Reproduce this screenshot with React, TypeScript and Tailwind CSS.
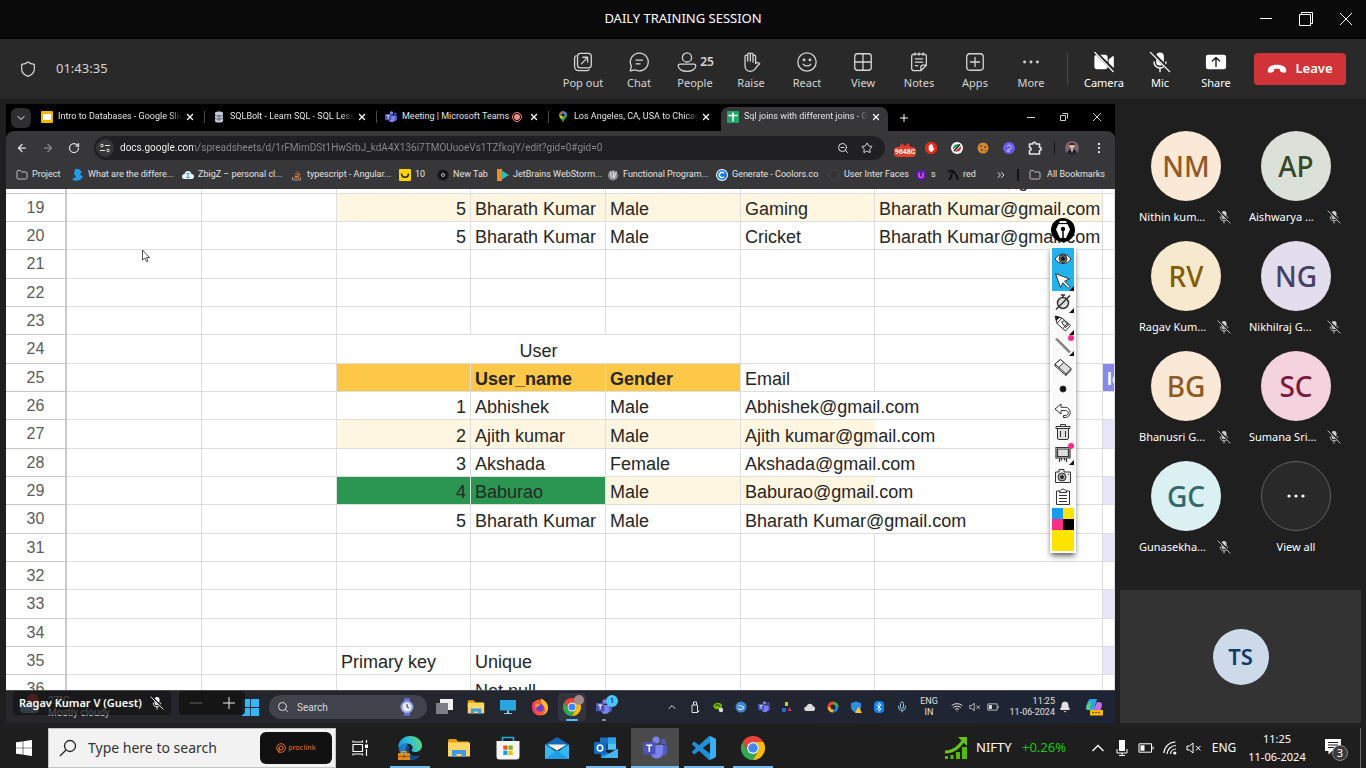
import type { ReactNode } from "react";
import {
  ArrowLeft,
  ArrowRight,
  Bell,
  Bluetooth,
  ChevronDown,
  ChevronUp,
  ChevronsRight,
  Folder,
  Mic,
  MoreVertical,
  Plus,
  RotateCw,
  Search,
  Star,
  Wifi,
  X,
  ZoomOut,
} from "lucide-react";

/* ---------- Meeting icons ---------- */

type IconProps = { children: ReactNode; className?: string; box?: string };

function Line({ children, className = "size-6", box = "0 0 24 24" }: IconProps) {
  return (
    <svg
      viewBox={box}
      className={className}
      fill="none"
      stroke="currentColor"
      strokeWidth="1.4"
      strokeLinecap="round"
      strokeLinejoin="round"
      aria-hidden="true"
    >
      {children}
    </svg>
  );
}

const PopOutIcon = () => (
  <Line>
    <rect x="6" y="2.500" width="15" height="16" rx="3.2" />
    <path d="M4.400 5.200A3 3 0 0 0 2.800 8v9A4.500 4.500 0 0 0 7.300 21.500H16a3 3 0 0 0 2.600-1.300M10.300 14 16.800 7M11.800 6.800h5.200V12" />
  </Line>
);
const ChatIcon = () => (
  <Line>
    <path d="M12.200 2.300a9.700 9.700 0 1 1-4.500 18.200L2.500 21.700l1.200-5.200A9.700 9.700 0 0 1 12.200 2.300zM8.800 10h7M8.800 14h4.400" />
  </Line>
);
const PeopleIcon = () => (
  <Line>
    <circle cx="12" cy="7" r="5" />
    <path d="M4.400 14.200h15.200a2 2 0 0 1 2 2c0 3.600-4.300 6-9.600 6s-9.600-2.400-9.600-6a2 2 0 0 1 2-2z" />
  </Line>
);
const HandIcon = () => (
  <Line>
    <path d="M5.500 12V6a1.450 1.450 0 0 1 2.900 0V11 3.800a1.450 1.450 0 0 1 2.900 0V11 3.800a1.450 1.450 0 0 1 2.900 0V12 6a1.400 1.400 0 0 1 2.800 0V13.500c1.300-1.300 3.600-1.200 4.500.4-2.400 1.600-3.500 3.800-5.100 5.900-1.200 1.500-2.700 2.400-5 2.400-3.600 0-5.900-2.600-5.900-6.400z" />
  </Line>
);
const ReactIcon = () => (
  <Line>
    <circle cx="12" cy="12" r="10" />
    <path d="M8 14.500c1.800 2.400 6.200 2.400 8 0" />
    <circle cx="8.800" cy="9.800" r=".8" fill="currentColor" />
    <circle cx="15.200" cy="9.800" r=".8" fill="currentColor" />
  </Line>
);
const ViewIcon = () => (
  <Line>
    <rect x="3" y="3" width="18" height="18" rx="3" />
    <path d="M12 3v18M3 12h18" />
  </Line>
);
const NotesIcon = () => (
  <Line>
    <path d="M6.500 3.500h11A2.500 2.500 0 0 1 20 6v9.500l-6 6H6.500A2.500 2.500 0 0 1 4 19V6a2.500 2.500 0 0 1 2.500-2.500zM20 15.500h-3.500a2.500 2.500 0 0 0-2.500 2.500v3.500M7.500 2v2.500M12 2v2.500M16.500 2v2.500M8 8.500h8M8 12.200h8M8 16h2.500" />
  </Line>
);
const AppsIcon = () => (
  <Line>
    <rect x="3" y="3" width="18" height="18" rx="3.500" />
    <path d="M12 7v10M7 12h10" />
  </Line>
);
const MoreIcon = () => (
  <svg viewBox="0 0 24 24" className="size-6" fill="currentColor" aria-hidden="true">
    <circle cx="5" cy="12" r="1.600" />
    <circle cx="12" cy="12" r="1.600" />
    <circle cx="19" cy="12" r="1.600" />
  </svg>
);
const CameraOffIcon = () => (
  <svg viewBox="0 0 24 24" className="size-6" aria-hidden="true">
    <path fill="currentColor" d="M4.500 4h8.500a3 3 0 0 1 3 3v10a3 3 0 0 1-3 3H4.500a3 3 0 0 1-3-3V7a3 3 0 0 1 3-3zM17 9.200l4.500-3.600c.6-.4 1.200 0 1.200.6v11.600c0 .6-.6 1-1.200.6L17 14.800z" />
    <path stroke="#292929" strokeWidth="3.500" d="M3.500 2 22.500 21" />
    <path stroke="currentColor" strokeWidth="1.500" strokeLinecap="round" d="M2 1.500 22 22.500" />
  </svg>
);
const MicOffIcon = ({ className = "size-6", bg = "#292929" }: { className?: string; bg?: string }) => (
  <svg viewBox="0 0 24 24" className={className} aria-hidden="true">
    <rect x="7.800" y="1.500" width="8.400" height="14.500" rx="4.200" fill="currentColor" />
    <path d="M5.500 12a6.500 6.500 0 0 0 13 0M12 18.500V22.500" fill="none" stroke="currentColor" strokeWidth="1.500" strokeLinecap="round" />
    <path stroke={bg} strokeWidth="3.500" d="M3.500 2 22.500 21" />
    <path stroke="currentColor" strokeWidth="1.500" strokeLinecap="round" d="M1.500 1.500 22.500 22.500" />
  </svg>
);
const ShareIcon = () => (
  <svg viewBox="0 0 24 24" className="size-6" aria-hidden="true">
    <rect x="1" y="4" width="22" height="16" rx="2.500" fill="currentColor" />
    <path d="M12 17V7.500M8 11l4-4 4 4" fill="none" stroke="#292929" strokeWidth="1.600" strokeLinecap="round" strokeLinejoin="round" />
  </svg>
);
const HangUpIcon = () => (
  <svg viewBox="0 0 20 10" className="h-2.5 w-5" fill="currentColor" aria-hidden="true">
    <path d="M10 .8c5.400 0 9.300 2.400 9.300 5.500 0 1.800-.8 2.700-2 2.500l-2.700-.5c-.9-.2-1.300-.7-1.500-1.500l-.4-1.700c-1.700-.6-3.700-.6-5.400 0l-.4 1.700c-.2.800-.6 1.300-1.500 1.500l-2.700.5c-1.200.2-2-.7-2-2.500C.7 3.200 4.600.8 10 .8z" />
  </svg>
);

/* ---------- Application logos ---------- */

const ChromeLogo = ({ className }: { className: string }) => (
  <svg viewBox="0 0 48 48" className={className} aria-hidden="true">
    <path fill="#ea4335" d="M24 12h20.800A24 24 0 0 0 3.200 12l10.400 18A12 12 0 0 1 24 12z" />
    <path fill="#34a853" d="M34.400 30 24 48A24 24 0 0 1 3.200 12l10.400 18a12 12 0 0 0 20.800 0z" />
    <path fill="#fbbc05" d="M34.400 30A12 12 0 0 0 24 12h20.800A24 24 0 0 1 24 48z" />
    <circle cx="24" cy="24" r="12" fill="#fff" />
    <circle cx="24" cy="24" r="9.500" fill="#4285f4" />
  </svg>
);
const TeamsLogo = ({ className }: { className: string }) => (
  <svg viewBox="0 0 24 24" className={className} aria-hidden="true">
    <circle cx="20.500" cy="5.500" r="2.500" fill="#5059c9" />
    <path fill="#5059c9" d="M16 9h7a1 1 0 0 1 1 1v6a4 4 0 0 1-6.500 3z" />
    <circle cx="13" cy="4" r="3.500" fill="#7b83eb" />
    <path fill="#7b83eb" d="M8 9h11a1 1 0 0 1 1 1v7a6.300 6.300 0 0 1-12.500 0z" />
    <rect x="0" y="6" width="12.500" height="12.500" rx="1" fill="#4b53bc" />
    <path d="M3.300 9.200h6M6.300 9.200v6.500" stroke="#fff" strokeWidth="1.600" />
  </svg>
);
const ExplorerLogo = ({ className }: { className: string }) => (
  <svg viewBox="0 0 24 24" className={className} aria-hidden="true">
    <path fill="#e6a100" d="M1 4.500A1.500 1.500 0 0 1 2.500 3H9l2 2.500h10.500V12H1z" />
    <path fill="#ffd767" d="M1 6.500h22v14H1z" />
    <path fill="#3f9be8" d="M5 21v-7h14v7h-4.500v-3h-5v3z" />
  </svg>
);
const EdgeLogo = () => (
  <svg viewBox="0 0 24 24" className="size-6" aria-hidden="true">
    <defs>
      <linearGradient id="edge-wave" x1="0" y1=".6" x2="1" y2=".3">
        <stop offset="0" stopColor="#1d8fdc" />
        <stop offset=".5" stopColor="#2fc0d8" />
        <stop offset="1" stopColor="#66d96a" />
      </linearGradient>
    </defs>
    <path fill="#1b7fd0" d="M1 8C0 18 5 24 12.500 24c4 0 7-1.500 9-4.500-6 2-11.500 0-11-5.500L9 7z" />
    <path fill="#114a8b" d="M8.500 10c-3 5 0 12 5.500 13.900C19 23.500 21 21 21.500 19.500c-6 2-11.500-.5-11-6 .2-1.500 1-2.500 2-3z" />
    <path fill="url(#edge-wave)" d="M0 11C1 4 6 0 12 0c7.500 0 12 5 12 9.500 0 4-3 6.500-6.500 6.500-3.500 0-4.500-1.200-3.500-2.300C16 11 13.500 7.500 9 7.500 4.500 7.500 1 9.500 0 12z" />
    <path fill="#e08c1a" d="M0 17h12v7H0z" />
    <path fill="none" stroke="#e9a13b" strokeWidth="1.200" d="M4 17v-1.500h4V17" />
    <path fill="#8a4b08" d="M0 20h12v.8H0zM5 19.300h2v2.200H5z" />
  </svg>
);
const StoreLogo = () => (
  <svg viewBox="0 0 24 24" className="size-6" aria-hidden="true">
    <path d="M6.500 6V1.500h11V6" fill="none" stroke="#27a8dc" strokeWidth="1.600" />
    <path fill="#f5f5f5" d="M.5 5h23v15.500a3 3 0 0 1-3 3h-17a3 3 0 0 1-3-3z" />
    <path fill="#f25022" d="M7.300 9.500h4.200v4.200H7.300z" />
    <path fill="#7fba00" d="M12.500 9.500h4.200v4.200h-4.200z" />
    <path fill="#00a4ef" d="M7.300 14.700h4.200v4.200H7.300z" />
    <path fill="#ffb900" d="M12.500 14.700h4.200v4.200h-4.200z" />
  </svg>
);
const MailLogo = () => (
  <svg viewBox="0 0 24 24" className="size-6" aria-hidden="true">
    <path fill="#1467b3" d="M0 8.500 12 1l12 7.500v4H0z" />
    <path fill="#35b8f1" d="M0 8.500 12 16l12-7.500V23H0z" />
    <path fill="#1d9fe8" d="M0 23l12-8.500L24 23z" />
    <path fill="#f4f4f4" d="M2.500 8.500h19L12 14.800z" />
  </svg>
);
const OutlookLogo = () => (
  <svg viewBox="0 0 24 24" className="size-6" aria-hidden="true">
    <path fill="#1a6fc4" d="M6 1.500h16V14H6z" />
    <path fill="#2da2ea" d="M14 1.500h8v6h-8z" />
    <path fill="#0f4f96" d="M6 7.500h8v6H6z" />
    <path fill="#50c4f5" d="M14 7.500h8v6h-8z" />
    <path fill="#1383d8" d="M7 12.500 15.500 18l8.500-5.500V22H7z" />
    <path fill="#45b5f0" d="m24 12.500-17 9.500h17z" />
    <rect x="0" y="6" width="12" height="12" rx="1" fill="#0f6cbd" />
    <ellipse cx="6" cy="12" rx="2.700" ry="3" fill="none" stroke="#fff" strokeWidth="1.600" />
  </svg>
);
const CodeLogo = () => (
  <svg viewBox="0 0 100 100" className="size-6" aria-hidden="true">
    <path
      fill="#1f8fd6"
      fillRule="evenodd"
      d="M96.460 10.800 75.860.88a6.230 6.230 0 0 0-7.100 1.200L29.350 38.040 12.190 25.010a4.160 4.160 0 0 0-5.320.24L1.370 30.260a4.170 4.170 0 0 0 0 6.160L16.250 50 1.360 63.580a4.170 4.170 0 0 0 0 6.160l5.500 5.010a4.160 4.160 0 0 0 5.320.24L29.350 61.960l39.410 35.960a6.220 6.220 0 0 0 7.100 1.200l20.600-9.910A6.250 6.250 0 0 0 100 83.570V16.430a6.250 6.250 0 0 0-3.540-5.630zM75.020 72.700 45.110 50l29.910-22.700z"
    />
    <path fill="#3aaef5" d="M75 0 96.500 10.800A6.200 6.200 0 0 1 100 16.400v67.200a6.200 6.200 0 0 1-3.500 5.600L75 99z" />
  </svg>
);
const FirefoxLogo = () => (
  <svg viewBox="0 0 18 18" className="size-[18px]" aria-hidden="true">
    <circle cx="9" cy="9.500" r="8" fill="#ff5a36" />
    <path fill="#ffbd2e" d="M10 .5c4 2 7 5 7 9.500a8 8 0 0 1-6 7.300c3-2 4-5 2.500-8C12 7 9.500 5 10 .5z" />
    <path fill="#e8317a" d="M1 8c0 6 4 9.500 8.500 9.300C4 17 2.500 11 4 6L2 3.500A9 9 0 0 0 1 8z" />
    <circle cx="9" cy="10" r="3.800" fill="#6a3fd0" />
    <path fill="#ff9a2e" d="M4 6.500c2-1 4-.5 5.500.5-1 1-3 .8-3.300 2.300-1.700 0-2.500-1.300-2.200-2.800z" />
  </svg>
);
const WindowsLogo = ({ className, skew }: { className: string; skew: boolean }) =>
  skew ? (
    <svg viewBox="0 0 16 16" className={className} fill="#fff" aria-hidden="true">
      <path d="M0 2.300 6.700 1.400v6.300H0zM7.300 1.300 16 0v7.700H7.300zM0 8.300h6.700v6.300L0 13.700zM7.300 8.300H16V16l-8.700-1.300z" />
    </svg>
  ) : (
    <svg viewBox="0 0 17 17" className={className} fill="#35b6f5" aria-hidden="true">
      <path d="M0 0h8.100v8.100H0zM8.900 0H17v8.100H8.900zM0 8.900h8.100V17H0zM8.900 8.900H17V17H8.900z" />
    </svg>
  );

/* ---------- Meeting header ---------- */

const tools = [
  { label: "Pop out", icon: <PopOutIcon /> },
  { label: "Chat", icon: <ChatIcon /> },
  { label: "People", icon: <PeopleIcon />, count: 25 },
  { label: "Raise", icon: <HandIcon /> },
  { label: "React", icon: <ReactIcon /> },
  { label: "View", icon: <ViewIcon /> },
  { label: "Notes", icon: <NotesIcon /> },
  { label: "Apps", icon: <AppsIcon /> },
  { label: "More", icon: <MoreIcon /> },
];
const devices = [
  { label: "Camera", icon: <CameraOffIcon /> },
  { label: "Mic", icon: <MicOffIcon /> },
  { label: "Share", icon: <ShareIcon /> },
];

function ToolButton({ label, icon, count }: { label: string; icon: ReactNode; count?: number }) {
  return (
    <button type="button" className="flex w-14 flex-col items-center gap-px pt-[3px] whitespace-nowrap text-[11px] leading-4">
      <span className="flex h-6 items-center">
        <span className="flex [&>svg]:size-[22px]">{icon}</span>
        {count !== undefined && <span className="pl-0.5 text-xs font-semibold">{count}</span>}
      </span>
      {label}
    </button>
  );
}

function Header() {
  return (
    <header>
      <div className="grid h-[38px] grid-cols-3 items-center bg-[#0a0a0a] text-white">
        <h1 className="col-start-2 text-center text-[13px]">DAILY TRAINING SESSION</h1>
        <div className="flex justify-end gap-5 pr-2.5">
          <button type="button" aria-label="Minimize" className="grid size-5 place-items-center">
            <svg viewBox="0 0 14 14" className="size-3.5" stroke="currentColor" fill="none"><path d="M1 6.500h12" /></svg>
          </button>
          <button type="button" aria-label="Restore" className="grid size-5 place-items-center">
            <svg viewBox="0 0 14 14" className="size-3.5" stroke="currentColor" fill="none"><path d="M.5 2.500h11v11H.5zM2.500 2.500v-2h11v11h-2" /></svg>
          </button>
          <button type="button" aria-label="Close" className="grid size-5 place-items-center">
            <svg viewBox="0 0 14 14" className="size-3.5" stroke="currentColor" fill="none"><path d="m1 1 12 12M13 1 1 13" /></svg>
          </button>
        </div>
      </div>
      <div className="flex h-[61px] items-center border-t border-black bg-[#292929] pl-5 pr-5 text-[#d6d6d6]">
        <Line className="size-4">
          <path strokeWidth="1.800" d="M12 1.500c3 2.500 5.800 3.300 9.500 3.500v7c0 5.500-4 9-9.500 11-5.500-2-9.500-5.500-9.500-11V5c3.700-.2 6.500-1 9.500-3.500z" />
        </Line>
        <span className="pl-5 text-[13px]">01:43:35</span>
        <div className="ml-auto flex items-center">
          {tools.map((t) => (
            <ToolButton key={t.label} {...t} />
          ))}
          <span className="mx-2 h-8 w-px bg-[#4a4a4a]" />
          <div className="flex text-white">
            {devices.map((t) => (
              <ToolButton key={t.label} {...t} />
            ))}
          </div>
          <button type="button" className="ml-2.5 flex h-8 w-[92px] items-center justify-center gap-2 rounded bg-[#d13438] text-[13px] font-semibold text-white">
            <HangUpIcon />
            Leave
          </button>
        </div>
      </div>
    </header>
  );
}

/* ---------- Shared browser ---------- */

const SlidesIcon = () => (
  <svg viewBox="0 0 12 12" className="size-3 shrink-0" aria-hidden="true">
    <rect width="12" height="12" rx="1" fill="#f5b400" />
    <path fill="#fff" d="M2 3h8v6H2z" />
  </svg>
);
const DbIcon = () => (
  <svg viewBox="0 0 12 12" className="size-3 shrink-0" aria-hidden="true">
    <path fill="#c5cbd6" d="M2 2c0-2 8-2 8 0v8c0 2-8 2-8 0z" />
    <path d="M2 4c1 1.500 7 1.500 8 0M2 7c1 1.500 7 1.500 8 0M6 4v6" fill="none" stroke="#555f70" />
  </svg>
);
const PinIcon = () => (
  <svg viewBox="0 0 12 12" className="size-3 shrink-0" aria-hidden="true">
    <path fill="#34a853" d="M2 4.300a4 4 0 0 1 8 0C10 7 6.700 8 6 12 5.300 8 2 7 2 4.300z" />
    <path fill="#ea4335" d="M3 1.500A4 4 0 0 1 7 .4L4 4z" />
    <path fill="#4285f4" d="M7 .4a4 4 0 0 1 2.500 2L7 5 5 3z" />
    <path fill="#fbbc04" d="M2.500 6 5 3.500 7 5.500 4 8z" />
    <circle cx="6" cy="4.200" r="1.400" fill="#111" />
  </svg>
);
const SheetsIcon = () => (
  <svg viewBox="0 0 12 12" className="size-3 shrink-0" aria-hidden="true">
    <rect width="12" height="12" rx="1" fill="#23a566" />
    <path d="M6 1.500v9M1.500 4.500h9" stroke="#fff" strokeWidth="1.500" />
  </svg>
);

const tabs = [
  { title: "Intro to Databases - Google Slid", icon: <SlidesIcon />, recording: false, active: false },
  { title: "SQLBolt - Learn SQL - SQL Less", icon: <DbIcon />, recording: false, active: false },
  { title: "Meeting | Microsoft Teams", icon: <TeamsLogo className="size-3 shrink-0" />, recording: true, active: false },
  { title: "Los Angeles, CA, USA to Chicag", icon: <PinIcon />, recording: false, active: false },
  { title: "Sql joins with different joins - G", icon: <SheetsIcon />, recording: false, active: true },
];

const tabClass = "flex h-6 w-[172px] items-center pl-2";
const activeTabClass = "flex h-6 w-[167px] items-center rounded-t-lg bg-[#37373a] pr-1 pl-1.5";

function TabStrip() {
  return (
    <div className="flex h-[27px] items-center bg-black pl-[5px]">
      <button type="button" aria-label="Search tabs" className="mr-0.5 grid size-5 shrink-0 place-items-center rounded-md bg-[#2e2e30] text-white">
        <ChevronDown className="size-3" />
      </button>
      <div className="flex" role="tablist">
        {tabs.map((t, i) => (
          <div key={t.title} className={`mt-[3px] pb-1 text-[#e3e3e3] ${t.active ? activeTabClass : tabClass}`}>
            {t.icon}
            <button
              type="button"
              role="tab"
              aria-selected={t.active}
              className={`ml-[5px] min-w-0 flex-1 whitespace-nowrap text-left text-[9px] ${t.recording ? "" : "mask-r-from-90%"}`}
            >
              {t.title}
            </button>
            {t.recording && (
              <span className="mr-1 grid size-2.5 shrink-0 place-items-center rounded-full border border-[#f28b82]">
                <span className="size-1.5 rounded-full bg-[#f28b82]" />
              </span>
            )}
            <button type="button" aria-label={`Close ${t.title}`} className="grid size-4 shrink-0 place-items-center text-white">
              <X className="size-2.5" strokeWidth={3} />
            </button>
            {!t.active && <span className={`ml-1.5 h-3 w-px shrink-0 ${i < 3 ? "bg-[#4a4a4d]" : ""}`} />}
          </div>
        ))}
      </div>
      <button type="button" aria-label="New tab" className="ml-2 grid size-4 place-items-center text-white">
        <Plus className="size-3" />
      </button>
      <div className="ml-auto flex gap-[17px] pr-2.5 pb-0.5 text-[#cfcfcf]">
        <button type="button" aria-label="Minimize browser" className="grid size-4 place-items-center">
          <svg viewBox="0 0 8 8" className="size-2" stroke="currentColor" fill="none"><path d="M0 4.500h8" /></svg>
        </button>
        <button type="button" aria-label="Restore browser" className="grid size-4 place-items-center">
          <svg viewBox="0 0 8 8" className="size-2" stroke="currentColor" fill="none"><path d="M.5 2.500h5v5h-5zM2.500.5h5v5" /></svg>
        </button>
        <button type="button" aria-label="Close browser" className="grid size-4 place-items-center">
          <svg viewBox="0 0 8 8" className="size-2" stroke="currentColor" fill="none"><path d="m0 0 8 8M8 0 0 8" /></svg>
        </button>
      </div>
    </div>
  );
}

const PuzzleIcon = () => (
  <svg viewBox="0 0 14 14" className="size-3.5" fill="none" stroke="#e8e8e8" strokeWidth="1.600" strokeLinejoin="round" aria-hidden="true">
    <path d="M1.500 3h3.300c0-2.400 3.200-2.400 3.200 0h3.500v3.300c2.200 0 2.200 3.200 0 3.200V13h-10V9.500c2.200 0 2.200-3 0-3z" />
  </svg>
);

const extensions = [
  {
    label: "Mail counter",
    icon: (
      <span className="flex flex-col items-center pt-1">
        <svg viewBox="0 0 12 4" className="h-1 w-3"><path d="M0 4 3 0l3 3 3-3 3 4" fill="#d93b2b" /></svg>
        <span className="rounded-sm bg-[#e2402f] px-px text-[7px] leading-[10px] font-bold text-white">9648C</span>
      </span>
    ),
  },
  {
    label: "Content blocker",
    icon: (
      <svg viewBox="0 0 12 12" className="size-3"><path fill="#e32b17" d="M3.500 0h5L12 3.500v5L8.500 12h-5L0 8.500v-5z" /><path fill="#fff" stroke="#fff" strokeWidth=".6" d="M4 6.500V4h.8V3h.9v-.6h.9V3h.9v3.500l.8-.8.6.6C8.200 8.500 7.500 9.500 6.300 9.500 4.800 9.500 4 8.500 4 6.500z" /></svg>
    ),
  },
  {
    label: "Color picker",
    icon: (
      <svg viewBox="0 0 12 12" className="size-3"><circle cx="6" cy="6" r="6" fill="#fff" /><path fill="#1b9a4b" d="M2 7.500c-.5-4 3-6 6.500-5z" /><path fill="#d3262b" d="M10 4c.5 4-2.500 6.500-6 5.500z" /><path stroke="#111" strokeWidth="1.200" d="m3 9 6-6.500" /></svg>
    ),
  },
  {
    label: "Cookies",
    icon: (
      <svg viewBox="0 0 12 12" className="size-3"><circle cx="6" cy="6" r="5.500" fill="#d38b32" /><g fill="#6e3b12"><circle cx="4" cy="4" r="1" /><circle cx="8" cy="5" r="1" /><circle cx="5" cy="8" r="1" /><circle cx="8.500" cy="8.500" r=".7" /></g></svg>
    ),
  },
  {
    label: "Assistant",
    icon: (
      <svg viewBox="0 0 12 12" className="size-3"><circle cx="6" cy="6" r="6" fill="#6a5cf0" /><path d="M4 4.500c1-2 5-1.500 4.500 1-.3 2-3.500 1-4.500 3.500h3" fill="none" stroke="#d9d4ff" /></svg>
    ),
  },
  { label: "Extensions", icon: <PuzzleIcon /> },
];

function AddressRow() {
  return (
    <div className="flex h-8 items-center pl-2 pr-2 pt-px text-[#e3e3e3]">
      <div className="flex w-20 gap-2.5">
        <button type="button" aria-label="Back" className="grid size-4 place-items-center"><ArrowLeft className="size-3" strokeWidth={2.5} /></button>
        <button type="button" aria-label="Forward" className="grid size-4 place-items-center text-[#8a8a8c]"><ArrowRight className="size-3" strokeWidth={2.5} /></button>
        <button type="button" aria-label="Reload" className="grid size-4 place-items-center"><RotateCw className="size-3" strokeWidth={2.5} /></button>
      </div>
      <div className="flex h-6 min-w-0 flex-1 items-center gap-1.5 rounded-full bg-[#202024] pl-0.5 pr-2.5">
        <button type="button" aria-label="Site information" className="grid size-[18px] place-items-center rounded-full bg-[#363639]">
          <svg viewBox="0 0 10 10" className="size-2.5" fill="none" stroke="currentColor"><circle cx="2" cy="2.500" r="1.300" /><path d="M5 2.500h5M0 7.500h5" /><circle cx="8" cy="7.500" r="1.300" /></svg>
        </button>
        <input
          type="text"
          aria-label="Address"
          defaultValue="docs.google.com/spreadsheets/d/1rFMimDSt1HwSrbJ_kdA4X136i7TMOUuoeVs1TZfkojY/edit?gid=0#gid=0"
          className="min-w-0 flex-1 bg-linear-to-r from-white from-[73px] to-[#8b8b90] to-[73px] bg-clip-text text-[10px] text-transparent outline-none"
        />
        <button type="button" aria-label="Zoom" className="grid size-4 place-items-center"><ZoomOut className="size-3" /></button>
        <button type="button" aria-label="Bookmark" className="ml-0.5 grid size-4 place-items-center"><Star className="size-3" /></button>
      </div>
      <div className="ml-[7px] flex items-center">
        {extensions.map((e) => (
          <button key={e.label} type="button" aria-label={e.label} className="grid h-5 w-[26px] place-items-center">
            {e.icon}
          </button>
        ))}
        <span className="mx-1.5 h-3 w-px bg-[#111]" />
        <button type="button" aria-label="Profile" className="mx-1 grid size-3.5 place-items-center overflow-hidden rounded-full bg-[#7d6470]">
          <svg viewBox="0 0 14 14" className="size-3.5"><circle cx="7" cy="5" r="2.500" fill="#e0b8a6" /><path fill="#23202c" d="M2 14c0-4 2-6 5-6s5 2 5 6z" /><path fill="#3a2730" d="M4 4c0-3 6-3 6 0z" /><path fill="#fff" d="m6 8 1 4 1-4z" /></svg>
        </button>
        <button type="button" aria-label="Browser menu" className="ml-2 grid size-4 place-items-center"><MoreVertical className="size-3.5" /></button>
      </div>
    </div>
  );
}

const bookmarks = [
  { label: "Project", width: "w-14", icon: <Folder className="size-3 text-[#bdbdbf]" /> },
  { label: "What are the differe...", width: "w-[110px]", icon: <svg viewBox="0 0 12 12" className="size-3"><path fill="#1f9bea" d="M3 0h4l3 3-2 2 3 3-3 3-5 1-3-2 4-2-2-3z" /></svg> },
  { label: "ZbigZ – personal cl...", width: "w-[109px]", icon: <svg viewBox="0 0 12 12" className="size-3"><path fill="#eaf4fb" d="M2.500 10a2.500 2.500 0 0 1 0-5C3 1 9 1 9.500 5a2.500 2.500 0 0 1 0 5z" /><path d="M4.500 4.500h3M6 4.500v4M4.500 8.500h3" stroke="#2b9be0" /></svg> },
  { label: "typescript - Angular...", width: "w-[108px]", icon: <svg viewBox="0 0 12 12" className="size-3"><path d="M1.500 8v3h8V8" fill="none" stroke="#9a9a9a" /><path d="M3 9h5M3.200 7l5 1M4 4.500l4.500 2.200M6 2.500l3 3.500" stroke="#f48024" /></svg> },
  { label: "10", width: "w-[38px]", icon: <svg viewBox="0 0 12 12" className="size-3"><rect width="12" height="12" rx="1" fill="#ffd400" /><path d="M2.500 4.500c0 5 7 5 7 0" fill="none" stroke="#222" strokeWidth="1.500" /></svg> },
  { label: "New Tab", width: "w-[60px]", icon: <svg viewBox="0 0 12 12" className="size-3"><circle cx="6" cy="6" r="5.500" fill="#17171a" /><circle cx="6" cy="6" r="1.500" fill="none" stroke="#bbb" /></svg> },
  { label: "JetBrains WebStorm...", width: "w-[110px]", icon: <svg viewBox="0 0 12 12" className="size-3"><path fill="#f28c1c" d="M0 0h5v12H0z" /><path fill="#2bc0b4" d="M4 1 12 6l-8 5z" /></svg> },
  { label: "Functional Program...", width: "w-[109px]", icon: <svg viewBox="0 0 12 12" className="size-3"><circle cx="6" cy="6.500" r="5" fill="#8f8f93" /><path d="M3 2.500 5 9M6 2l1 7M9.500 2.500 7 9" stroke="#efefef" /></svg> },
  { label: "Generate - Coolors.co", width: "w-28", icon: <svg viewBox="0 0 12 12" className="size-3"><circle cx="6" cy="6" r="6" fill="#fff" /><circle cx="6" cy="6" r="5" fill="#1479f0" /><path d="M8 4.200a2.700 2.700 0 1 0 0 3.600" fill="none" stroke="#fff" strokeWidth="1.600" /></svg> },
  { label: "User Inter Faces", width: "w-[87px]", icon: <svg viewBox="0 0 12 12" className="size-3"><circle cx="6" cy="6" r="5" fill="#343438" stroke="#47474b" /></svg> },
  { label: "s", width: "w-8", icon: <svg viewBox="0 0 12 12" className="size-3"><circle cx="6" cy="6" r="5.500" fill="#4b1fa3" /><path d="M4 3.500v3c0 2.700 4 2.700 4 0v-3" fill="none" stroke="#ff4fd0" strokeWidth="1.500" /></svg> },
  { label: "red", width: "w-8", icon: <svg viewBox="0 0 12 12" className="size-3"><path d="M1 3c2-2 4-2 6 0s3 5 4 8M5 3c0 3-1 6-3 8" fill="none" stroke="#0f0f10" strokeWidth="1.800" /></svg> },
];

function BookmarksRow() {
  return (
    <div className="flex h-[26px] items-center pl-2.5 pr-2.5 pb-[3px] text-[9px] text-[#e3e3e3]">
      {bookmarks.map((b) => (
        <a key={b.label} href="#" className={`flex shrink-0 items-center gap-1 whitespace-nowrap ${b.width}`}>
          {b.icon}
          {b.label}
        </a>
      ))}
      <button type="button" aria-label="More bookmarks" className="ml-auto"><ChevronsRight className="size-3" /></button>
      <span className="mx-2.5 h-3 w-0.5 bg-[#111]" />
      <a href="#" className="flex items-center gap-1.5 whitespace-nowrap">
        <Folder className="size-3 text-[#bdbdbf]" />
        All Bookmarks
      </a>
    </div>
  );
}

/* ---------- Spreadsheet ---------- */

type Cell = { text?: string; fill?: string; bold?: boolean; right?: boolean; center?: boolean; span?: number; spill?: boolean };

const cream = "bg-[#fef6e0]";
const amber = "bg-[#fdc748]";
const green = "bg-[#2b9651]";
const lavender = "bg-[#e6e6fa]";
const plain = (n: number): Cell[] => Array.from({ length: n }, () => ({}));

const person = (id: string, name: string, gender: string, idFill = "", rest = ""): Cell[] => [
  ...plain(2),
  { text: id, right: true, fill: idFill },
  { text: name, fill: idFill },
  { text: gender, fill: rest },
  { text: `${name}@gmail.com`, fill: rest, spill: true },
  {},
  { fill: rest ? lavender : "" },
];

const hobby = (name: string, fill = ""): Cell[] => [
  ...plain(2),
  { text: "5", right: true, fill },
  { text: "Bharath Kumar", fill },
  { text: "Male", fill },
  { text: name, fill },
  { text: "Bharath Kumar@gmail.com", fill },
  {},
];

const rows: { n: number; cells: Cell[] }[] = [
  { n: 18, cells: hobby("Movies") },
  { n: 19, cells: hobby("Gaming", cream) },
  { n: 20, cells: hobby("Cricket") },
  { n: 21, cells: plain(8) },
  { n: 22, cells: plain(8) },
  { n: 23, cells: plain(8) },
  { n: 24, cells: [...plain(2), { text: "User", center: true, span: 3 }, ...plain(3)] },
  {
    n: 25,
    cells: [
      ...plain(2),
      { fill: amber },
      { text: "User_name", fill: amber, bold: true },
      { text: "Gender", fill: amber, bold: true },
      { text: "Email" },
      {},
      { text: "lo", fill: "bg-[#8989eb] text-white", bold: true },
    ],
  },
  { n: 26, cells: person("1", "Abhishek", "Male") },
  { n: 27, cells: person("2", "Ajith kumar", "Male", cream, cream) },
  { n: 28, cells: person("3", "Akshada", "Female") },
  { n: 29, cells: person("4", "Baburao", "Male", green, cream) },
  { n: 30, cells: person("5", "Bharath Kumar", "Male") },
  { n: 31, cells: [...plain(7), { fill: lavender }] },
  { n: 32, cells: plain(8) },
  { n: 33, cells: [...plain(7), { fill: lavender }] },
  { n: 34, cells: plain(8) },
  { n: 35, cells: [...plain(2), { text: "Primary key" }, { text: "Unique" }, ...plain(3), { fill: lavender }] },
  { n: 36, cells: [...plain(3), { text: "Not null" }, ...plain(4)] },
];

function Sheet() {
  return (
    <div className="min-h-0 flex-1 overflow-hidden bg-white">
      <table className="-mt-6 w-full table-fixed border-separate border-spacing-0 font-['Liberation_Sans',Arial,sans-serif] text-[18px] leading-6 text-[#262626]">
        <colgroup>
          <col className="w-[61px]" />
          <col className="w-[135px]" />
          <col className="w-[135px]" />
          <col className="w-[134px]" />
          <col className="w-[135px]" />
          <col className="w-[135px]" />
          <col className="w-[134px]" />
          <col className="w-[228px]" />
          <col />
        </colgroup>
        <tbody>
          {rows.map((r) => (
            <tr key={r.n} className="h-7 nth-[3n+1]:h-[29px] first:h-7">
              <th scope="row" className="border-r-2 border-b border-[#c9c9c9] p-0 text-base leading-6 font-normal text-[#5c5c5c]">
                {r.n}
              </th>
              {r.cells.map((c, i) => (
                <td
                  key={i}
                  colSpan={c.span}
                  className={[
                    "border-b border-[#dedede] py-0 pr-1 pl-1 align-bottom whitespace-nowrap",
                    c.spill ? "" : "border-r overflow-hidden",
                    c.bold ? "font-bold" : "",
                    c.right ? "text-right" : "",
                    c.center ? "text-center" : "",
                    c.fill ?? "",
                  ].join(" ")}
                >
                  {c.text}
                </td>
              ))}
            </tr>
          ))}
        </tbody>
      </table>
    </div>
  );
}

/* ---------- Annotation toolbar ---------- */

const Corner = () => (
  <svg viewBox="0 0 5 5" className="absolute right-0 bottom-0 size-[5px]" aria-hidden="true"><path fill="#111" d="M5 0v5H0z" /></svg>
);
const Dot = () => <span className="absolute top-0 right-0 size-1.5 rounded-full bg-[#ff2d87]" />;

const penTools: { label: string; art: ReactNode; corner?: boolean; dot?: boolean; on?: boolean }[] = [
  { label: "Show annotations", on: true, art: <><path fill="#fff" d="M1 9c4-6.500 12-6.500 16 0-4 6-12 6-16 0z" /><circle cx="9" cy="8.700" r="4" fill="#777" /><circle cx="9" cy="8.700" r="2" fill="#111" /></> },
  { label: "Pointer", on: true, corner: true, art: <path fill="#fff" d="m1.500 1.500 14 5.500-5 2.200 5.500 5.500-1.600 1.600L9 10.800 6.500 15.500z" /> },
  { label: "Timer", corner: true, art: <g strokeWidth="1.500"><circle cx="9" cy="10" r="5.500" fill="#ddd" /><path d="M7 2h4M9 2v2.500M2 16.500 16 2.500" /></g> },
  { label: "Pencil", corner: true, art: <><path fill="#fff" d="M1.500 1.500 8 3l8.500 7.500-5 5.500L3 8.500z" /><path fill="#ddd" d="m7.500 7 2.800-1.500 4.200 4.500-3 2.500z" /><path d="M3 8.500 8 3M9 13.500l5-5.500" /><path fill="#111" d="M1 1l4.500 1L2.300 5.500z" /></> },
  { label: "Line", corner: true, dot: true, art: <path fill="#ddd" d="m2 2.500 1-1 13 13-1 1z" /> },
  { label: "Eraser", art: <><path fill="#ddd" d="m1 6 5.500-4.500 10.500 9-5 5.500z" /><path fill="#fff" d="m1 6 5.500-4.500 3.300 3-5 4.800z" /><path d="M1 6v2l11 9.500V16M17 10.500v1.800l-5 5.200" /></> },
  { label: "Brush size", art: <circle cx="9" cy="9" r="3" fill="#111" /> },
  { label: "Undo", art: <path fill="#fff" d="m1 7 6-5v3.300h4.500c6 0 6.500 10.200-.5 10.200H9.500v-2h1.700c4 0 4-5 .3-5H7V12z" /> },
  { label: "Delete", art: <><path fill="#ddd" d="M3.500 5.500h11V15a1.500 1.500 0 0 1-1.500 1.500H5A1.500 1.500 0 0 1 3.500 15z" /><path d="M2 3.500h14v2H2zM6.500 3.500v-2h5v2M6.500 8v6M11.500 8v6" /></> },
  { label: "Whiteboard", corner: true, dot: true, art: <><path fill="#ddd" strokeWidth="1.200" d="M3.500 4h11v7.500h-11z" /><path strokeWidth="1.200" d="M2 2.500h14v10.500H2zM5.500 13v4M12.500 13v4M7.500 13v2.500M10.500 13v2.500" /></> },
  { label: "Screenshot", art: <><path fill="#eee" d="M1.500 5H5V2.500h5V5h6.500v10.500h-15z" /><circle cx="8" cy="10" r="4" fill="#aaa" /><circle cx="8" cy="10" r="1.500" fill="#222" /><path d="M14 7.500h1" /></> },
  { label: "Clipboard", art: <path fill="#fff" d="M2.500 3h4c0-2.500 5-2.500 5 0h4v13.500h-13zM5.500 3v1.500h7V3M5 7.500h8M5 10.500h8M5 13.500h8" /> },
];

function AnnotationBar() {
  return (
    <div className="absolute top-[114px] right-[39px] flex w-[26px] flex-col items-center">
      <button type="button" aria-label="Annotation pen" className="size-6">
        <svg viewBox="0 0 24 24" className="size-6">
          <circle cx="12" cy="12" r="12" fill="#000" />
          <path fill="#fff" d="M9 3h6l4 8.500-4 8.500H9l-4-8.500z" />
          <path stroke="#000" strokeWidth="1.500" d="M12 11v10" />
          <circle cx="12" cy="11" r="2.200" fill="#000" />
          <path stroke="#000" strokeWidth="1.200" d="M7 5.500h10" />
        </svg>
      </button>
      <div className="mt-1 w-full border-2 border-white bg-[#fafafa] shadow-md shadow-black/50">
        <div className="flex h-[260px] flex-col">
          {penTools.map((t) => (
            <button
              key={t.label}
              type="button"
              aria-label={t.label}
              className={`relative grid flex-1 place-items-center ${t.on ? "bg-[#22b3ee]" : ""}`}
            >
              <svg viewBox="0 0 18 18" className="size-[18px]" fill="none" stroke="#333" strokeWidth="1">{t.art}</svg>
              {t.corner && <Corner />}
              {t.dot && <Dot />}
            </button>
          ))}
        </div>
        <div className="grid grid-cols-2">
          <button type="button" aria-label="Blue" className="h-[11px] bg-[#0f9df5]" />
          <button type="button" aria-label="Yellow" className="h-[11px] bg-[#ffe400]" />
          <button type="button" aria-label="Pink" className="h-[11px] bg-[#ff2d87]" />
          <button type="button" aria-label="Black" className="h-[11px] bg-black" />
        </div>
        <button type="button" aria-label="Current color" className="block h-[21px] w-full bg-[#ffe400]" />
      </div>
    </div>
  );
}

/* ---------- Shared desktop task bar ---------- */

const MuteIcon = ({ className }: { className: string }) => (
  <svg viewBox="0 0 16 12" className={className} fill="none" stroke="currentColor" aria-hidden="true"><path d="M1 4h2.500L7 1v10L3.500 8H1zM10 4l4.500 4.500M14.500 4 10 8.500" /></svg>
);
const BatteryIcon = ({ className }: { className: string }) => (
  <svg viewBox="0 0 16 10" className={className} fill="none" stroke="currentColor" aria-hidden="true"><path d="M1 .8h12.500v8.400H1zM15 3.500v3" /><path fill="currentColor" stroke="none" d="M2.500 2.300h4v5.400h-4z" /></svg>
);

const sharedApps = [
  { label: "Desktops", icon: <svg viewBox="0 0 18 18" className="size-[18px]"><path fill="#f2f2f2" d="M5 1h13v11H5z" /><path fill="#7d7f86" d="M1 5h12v11H1z" /></svg> },
  { label: "Shared file explorer", icon: <ExplorerLogo className="size-[18px]" /> },
  { label: "Display", icon: <svg viewBox="0 0 18 18" className="size-[18px]"><path fill="#2aa5dd" d="M1 2h16v10.500H1z" /><path fill="#83cdec" d="M8 12.500h2V15h3v1H5v-1h3z" /></svg> },
  { label: "Firefox", icon: <FirefoxLogo /> },
  {
    label: "Shared Chrome",
    icon: (
      <span className="relative flex h-7 w-7 items-center justify-center rounded bg-[#33343d]">
        <ChromeLogo className="size-[18px]" />
        <span className="absolute top-0.5 right-0.5 size-2.5 rounded-full bg-[#a38a86]" />
        <span className="absolute bottom-0 h-0.5 w-3 rounded bg-[#4cc2ff]" />
      </span>
    ),
  },
  {
    label: "Shared Teams",
    icon: (
      <span className="relative flex h-7 w-7 items-center justify-center">
        <TeamsLogo className="size-4" />
        <span className="absolute top-0.5 right-0 grid size-3 place-items-center rounded-full bg-[#4cc2ff] text-[8px] leading-3 text-black">1</span>
        <span className="absolute bottom-0 h-0.5 w-1 rounded bg-[#9a9a9a]" />
      </span>
    ),
  },
];

const trayIcons = [
  { label: "Show hidden icons", icon: <ChevronUp className="size-3" /> },
  { label: "USB", icon: <svg viewBox="0 0 12 12" className="size-3" fill="none" stroke="currentColor"><path d="M3 4h5.500v7.500H3zM4.500 4V1h3v3M8.500 11.500l2-2" /></svg> },
  { label: "Graphics", icon: <svg viewBox="0 0 12 12" className="size-3"><path fill="#76b900" d="M1 5c2-4 7-4 9-1v3L7 8.500 3 8z" /><path d="M3 5c2-2 5-1 5 1" fill="none" stroke="#111" /><circle cx="9" cy="9" r="2.200" fill="#ddd" /></svg> },
  { label: "Sync", icon: <svg viewBox="0 0 12 12" className="size-3"><circle cx="6" cy="6" r="5.500" fill="#3d86d8" /><path d="M3 5.500c2-2 3 0 6 .5M3 7.500c2 1.500 4 1 6-.5" stroke="#fff" fill="none" /></svg> },
  { label: "Teams status", icon: <TeamsLogo className="size-3" /> },
  { label: "Drive", icon: <svg viewBox="0 0 12 12" className="size-3"><path fill="#c7d02c" d="M4 1h3v4H4z" /><path fill="#c43a4b" d="m8 6 3 4H7z" /><path fill="#2b68d0" d="M1 7h4v4H1z" /></svg> },
  { label: "Cloud", icon: <svg viewBox="0 0 12 12" className="size-3"><path fill="#dcdcdc" d="M2.500 10a2.300 2.300 0 0 1 0-4.600C3.500 2 8 2 8.800 5a2.600 2.600 0 0 1 .7 5z" /></svg> },
  { label: "Browser", icon: <svg viewBox="0 0 12 12" className="size-3" fill="none" strokeWidth="3"><path stroke="#f0432f" d="M6 2a4 4 0 0 0-4 4" /><path stroke="#3bb54a" d="M6 2a4 4 0 0 1 4 4" /><path stroke="#2b79e0" d="M10 6a4 4 0 0 1-4 4" /><path stroke="#f7b52b" d="M2 6a4 4 0 0 0 4 4" /></svg> },
  { label: "Security", icon: <svg viewBox="0 0 12 12" className="size-3"><path fill="#2a8fe0" d="M6 .5 11 2v4c0 3-2 4.500-5 5.500C3 10.500 1 9 1 6V2z" /><path fill="#ffc22e" d="M8.500 5.500 12 12H5z" /></svg> },
  { label: "Bluetooth", icon: <span className="grid h-3 w-2.5 place-items-center rounded bg-[#1082f0] text-white"><Bluetooth className="size-2.5" /></span> },
  { label: "Microphone in use", icon: <Mic className="size-3 text-[#8dc1dd]" /> },
];

function SharedTaskbar() {
  return (
    <div className="flex h-[33px] items-center border-t border-[#4a4a50] bg-linear-to-r from-[#26262b] via-[#23262f] to-[#1d2433] pr-3 text-[#e0e0e0]">
      <div className="flex w-[236px] items-end gap-2 self-stretch pl-3.5 text-[10px] leading-3 text-[#d0d0d0]">
        <svg viewBox="0 0 20 22" className="mb-2 h-[22px] w-5"><path fill="#7aa2c8" d="M4 20a4 4 0 0 1 0-8c3-4 9-3 10 1a3.500 3.500 0 0 1 2 7z" /><circle cx="13" cy="6" r="5.500" fill="#c0393b" /></svg>
        <span className="pb-1">27°C<br />Mostly cloudy</span>
      </div>
      <button type="button" aria-label="Shared start menu"><WindowsLogo className="size-[17px]" skew={false} /></button>
      <label className="ml-2.5 flex h-6 w-[158px] items-center gap-2 rounded-full bg-[#41434c] pl-2 pr-3">
        <Search className="size-3 shrink-0" />
        <input type="text" placeholder="Search" aria-label="Search shared desktop" className="w-full min-w-0 text-[10px] outline-none placeholder:text-[#d8d8d8]" />
        <svg viewBox="0 0 16 18" className="h-[18px] w-4 shrink-0"><path fill="#5d6cc9" d="M5 0h6v18H5z" /><circle cx="8" cy="9" r="6.500" fill="#8f9be8" /><circle cx="8" cy="9" r="4.500" fill="#e8ecfa" /><path d="M8 6v3l2 1" stroke="#333" fill="none" /></svg>
      </label>
      <div className="ml-px flex">
        {sharedApps.map((a) => (
          <button key={a.label} type="button" aria-label={a.label} className="grid h-7 w-8 place-items-center">{a.icon}</button>
        ))}
      </div>
      <div className="ml-auto flex items-center">
        {trayIcons.map((t) => (
          <button key={t.label} type="button" aria-label={t.label} className="grid h-6 w-[23px] place-items-center">{t.icon}</button>
        ))}
        <span className="w-8 text-center text-[9px] leading-[11px]">ENG<br />IN</span>
        <span className="flex items-center gap-1.5 pl-1.5">
          <Wifi className="size-3" />
          <MuteIcon className="h-2.5 w-3" />
          <BatteryIcon className="h-2 w-3" />
        </span>
        <span className="w-14 text-right text-[9px] leading-[11px]">11:25<br />11-06-2024</span>
        <Bell className="ml-1 size-3 fill-current" />
        <svg viewBox="0 0 18 18" className="ml-3.5 size-[18px]" aria-hidden="true">
          <path fill="#2aa6e8" d="M6 1h6l-3 11H3C0 12 1 9 2 6s1.500-5 4-5z" />
          <path fill="#c86ee0" d="M12 4h2c4 0 3 4 2 7s-2 5-5 5H7z" />
          <path fill="#5fcf6a" d="M2 7 6 3l-1 9H3C1 12 1 10 2 7z" />
          <path fill="#fbb814" d="M5 12h13v5.500H5z" />
          <path stroke="#5a3d00" d="M7 14.700h9" strokeDasharray="2 1" />
        </svg>
      </div>
    </div>
  );
}

function SharedScreen() {
  return (
    <section aria-label="Shared screen" className="relative flex min-w-0 flex-1 flex-col overflow-hidden bg-black font-[Roboto,sans-serif]">
      <TabStrip />
      <div className="rounded-t-lg bg-[#37373a]">
        <AddressRow />
        <BookmarksRow />
      </div>
      <Sheet />
      <SharedTaskbar />
      <svg viewBox="0 0 10 14" className="absolute top-[145px] left-[135px] h-3.5 w-2.5" aria-hidden="true">
        <path fill="#fff" stroke="#222" strokeWidth=".8" d="M1.500 1v10l2.300-2 1.700 3.500 1.500-.7L5.500 8.500h3z" />
      </svg>
      <AnnotationBar />
      <div className="absolute bottom-2 left-[7px] flex gap-2 font-['Noto_Sans',sans-serif] text-white">
        <span className="flex h-6 w-[158px] items-center justify-between rounded bg-[#141414]/70 pl-1.5 pr-[7px] text-[11px] font-semibold whitespace-nowrap">
          Ragav Kumar V (Guest)
          <MicOffIcon className="size-3.5" bg="#1a1a1a" />
        </span>
        <span className="flex h-6 w-[66px] items-center justify-around rounded bg-[#141414]/90">
          <button type="button" aria-label="Zoom out"><svg viewBox="0 0 12 12" className="size-3" stroke="#666"><path d="M0 6h12" /></svg></button>
          <button type="button" aria-label="Zoom in"><svg viewBox="0 0 12 12" className="size-3" stroke="#eee"><path d="M0 6h12M6 0v12" /></svg></button>
        </span>
      </div>
    </section>
  );
}

/* ---------- Participants ---------- */

const participants = [
  { initials: "NM", name: "Nithin kum...", color: "bg-[#fbe9d7] text-[#8f5a26]" },
  { initials: "AP", name: "Aishwarya ...", color: "bg-[#dbe1d8] text-[#37472b]" },
  { initials: "RV", name: "Ragav Kum...", color: "bg-[#f7e9cd] text-[#835b00]" },
  { initials: "NG", name: "Nikhilraj G...", color: "bg-[#e2deee] text-[#464067]" },
  { initials: "BG", name: "Bhanusri G...", color: "bg-[#fbe9d7] text-[#8f5a26]" },
  { initials: "SC", name: "Sumana Sri...", color: "bg-[#f4d3df] text-[#7a1b3d]" },
  { initials: "GC", name: "Gunasekha...", color: "bg-[#dbf0f2] text-[#34696c]" },
];

function Participants() {
  return (
    <aside aria-label="Participants" className="flex w-[241px] shrink-0 flex-col">
      <div className="grid flex-1 grid-cols-[110px_110px] content-start pt-[27px] pl-[11px] text-white">
        {participants.map((p) => (
          <div key={p.initials} className="flex h-[110px] flex-col items-center">
            <span className={`grid size-[70px] place-items-center rounded-full text-[28px] font-medium ${p.color}`}>{p.initials}</span>
            <span className="mt-[7px] flex w-full items-center justify-between pr-2.5 pl-2 text-[11px] leading-[18px] whitespace-nowrap">
              {p.name}
              <MicOffIcon className="size-3.5 text-[#d0d0d0]" bg="#1f1f1f" />
            </span>
          </div>
        ))}
        <button type="button" className="flex h-[110px] flex-col items-center text-[11px] leading-[18px]">
          <span className="grid size-[70px] place-items-center rounded-full border border-[#616161] bg-[#292929]"><MoreIcon /></span>
          <span className="mt-[7px]">View all</span>
        </button>
      </div>
      <div className="grid h-[133px] place-items-center bg-[#333]">
        <span className="grid size-14 place-items-center rounded-full bg-[#cddaea] text-[22px] font-semibold text-[#123a63]">TS</span>
      </div>
    </aside>
  );
}

/* ---------- Desktop task bar ---------- */

const apps = [
  { label: "Edge", icon: <EdgeLogo />, open: true, active: false },
  { label: "File Explorer", icon: <ExplorerLogo className="size-6" />, open: false, active: false },
  { label: "Store", icon: <StoreLogo />, open: false, active: false },
  { label: "Mail", icon: <MailLogo />, open: false, active: false },
  { label: "Outlook", icon: <OutlookLogo />, open: true, active: false },
  { label: "Teams", icon: <TeamsLogo className="size-6" />, open: true, active: true },
  { label: "Code", icon: <CodeLogo />, open: true, active: false },
  { label: "Chrome", icon: <ChromeLogo className="size-6" />, open: true, active: false },
];

function Taskbar() {
  return (
    <footer className="mt-[5px] flex h-10 items-center bg-[#1e1e1e] text-white">
      <button type="button" aria-label="Start" className="grid h-10 w-12 place-items-center"><WindowsLogo className="size-4" skew /></button>
      <label className="flex h-10 w-72 items-center gap-[11px] border border-[#c4c4c4] bg-[#f2f2f2] pr-[3px] pl-2.5 text-[#333]">
        <svg viewBox="0 0 18 18" className="size-[18px] shrink-0" fill="none" stroke="#222" strokeWidth="1.300"><circle cx="11" cy="7" r="5.500" /><path d="m7 11-6 6" /></svg>
        <input type="text" placeholder="Type here to search" aria-label="Type here to search" className="min-w-0 flex-1 text-sm outline-none placeholder:text-[#333]" />
        <span className="flex h-8 w-[72px] shrink-0 items-center justify-center gap-0.5 rounded-md bg-[#111] font-['DejaVu_Sans',sans-serif] text-[7px] text-[#f07022]">
          <svg viewBox="0 0 10 10" className="size-2.5" fill="none" stroke="currentColor"><circle cx="5" cy="5" r="4.300" /><circle cx="5" cy="5" r="2" /><path d="M3 5v5" /></svg>
          proclink
        </span>
      </label>
      <button type="button" aria-label="Task view" className="mr-0.5 grid h-10 w-12 place-items-center">
        <svg viewBox="0 0 16 16" className="size-4" fill="none" stroke="currentColor" strokeWidth="1.200"><path d="M1 4.500h9.500v7H1zM1 2.500V.5M10.500 2.500V.5M1 15.500v-2M10.500 15.500v-2M1 2h9.500M1 14h9.500M14.500 0v3M14.500 9v7" /><path fill="currentColor" d="M13.600 5h2v2.500h-2z" /></svg>
      </button>
      <div className="flex gap-px">
        {apps.map((a) => (
          <button
            key={a.label}
            type="button"
            aria-label={a.label}
            className={`relative grid h-10 w-12 place-items-center ${a.active ? "bg-[#4b4b4b]" : ""}`}
          >
            {a.icon}
            {a.open && <span className={`absolute bottom-0 h-0.5 bg-[#76b9ed] ${a.active ? "w-12" : "w-10"}`} />}
          </button>
        ))}
      </div>
      <div className="ml-auto flex items-center pr-[5px]">
        <svg viewBox="0 0 24 24" className="size-6" aria-hidden="true">
          <path fill="#55b80f" d="M1 20h3v3H1zM6.500 19h3v4h-3zM12 16h4v7h-4zM18 11h5v12h-5z" />
          <path d="M1 16C9 16 14 12 20 4" fill="none" stroke="#67c41c" strokeWidth="3" />
          <path fill="#67c41c" d="M14 1h9v9z" />
        </svg>
        <span className="ml-2 w-[46px] text-[13px]">NIFTY</span>
        <span className="w-16 text-[13px] text-[#16c60c]">+0.26%</span>
        <button type="button" aria-label="Show hidden icons on this device" className="grid h-10 w-6 place-items-center"><svg viewBox="0 0 12 8" className="h-2 w-3" fill="none" stroke="currentColor" strokeWidth="1.300"><path d="m.5 7 5.500-5.500L11.500 7" /></svg></button>
        <button type="button" aria-label="Microphone" className="grid h-10 w-6 place-items-center"><svg viewBox="0 0 12 16" className="h-4 w-3"><path fill="#fff" d="M3 0h6v11H3z" /><path d="M1 9v4h10V9M6 13v2.500M3 15.500h6" fill="none" stroke="#fff" /></svg></button>
        <button type="button" aria-label="Battery" className="grid h-10 w-6 place-items-center"><BatteryIcon className="h-2.5 w-4" /></button>
        <button type="button" aria-label="Network" className="grid h-10 w-6 place-items-center">
          <svg viewBox="0 0 14 14" className="size-3.5" fill="none" stroke="currentColor" strokeWidth="1.200"><path d="M1 12A11.500 11.500 0 0 1 12.500 1M4 13a9 9 0 0 1 9-8.500M7.500 13A5.500 5.500 0 0 1 13 8" /><circle cx="11.800" cy="12" r="1" fill="currentColor" /></svg>
        </button>
        <button type="button" aria-label="Volume" className="grid h-10 w-6 place-items-center"><MuteIcon className="h-3 w-4" /></button>
        <span className="w-9 text-center text-xs">ENG</span>
        <time className="w-[70px] text-center text-[11px] leading-[18px] whitespace-nowrap">11:25<br />11-06-2024</time>
        <button type="button" aria-label="Notifications" className="grid h-10 w-12 place-items-center">
          <svg viewBox="0 0 26 26" className="size-[26px]">
            <path fill="#fff" d="M2 4h16v12H9l-3.500 3.500V16H2z" />
            <path stroke="#1e1e1e" d="M5 7.500h10M5 10h10M5 12.500h6" />
            <circle cx="17" cy="18" r="7.500" fill="#3a3a3a" stroke="#8a8a8a" />
            <text x="17" y="22" textAnchor="middle" fontSize="11" fill="#fff">3</text>
          </svg>
        </button>
        <span className="h-10 w-px bg-[#6a6a6a]" />
      </div>
    </footer>
  );
}

export default function App() {
  return (
    <div className="flex h-screen flex-col overflow-hidden bg-[#1f1f1f] font-['Noto_Sans',sans-serif]">
      <Header />
      <main className="flex min-h-0 flex-1 gap-[5px] pt-[5px] pr-[5px] pl-1.5">
        <SharedScreen />
        <Participants />
      </main>
      <Taskbar />
    </div>
  );
}
